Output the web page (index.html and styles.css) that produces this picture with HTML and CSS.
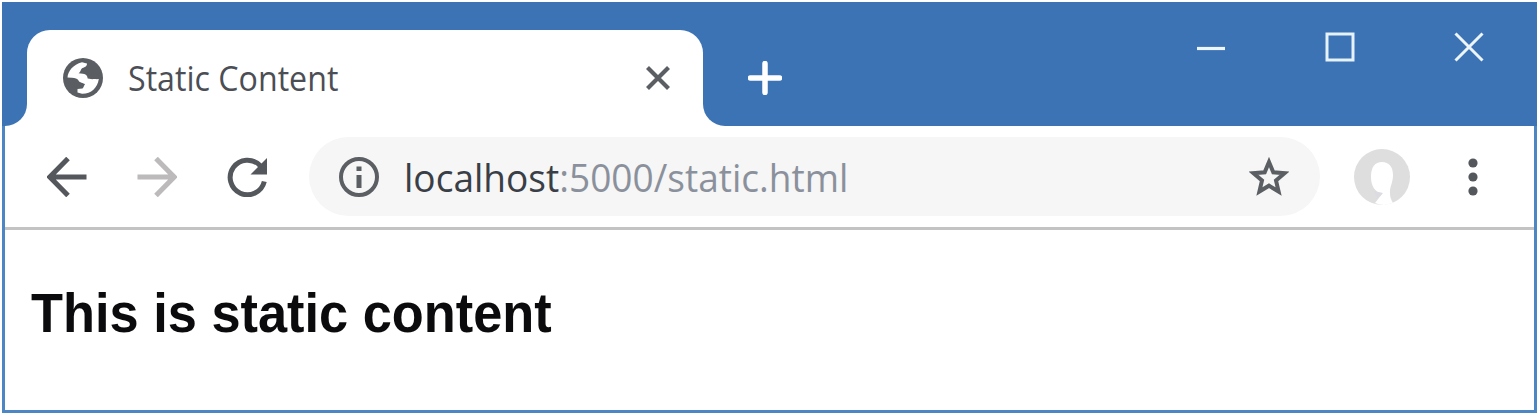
FILE: index.html
```html
<!DOCTYPE html>
<html lang="en">
<head>
<meta charset="utf-8">
<title>Static Content</title>
<link rel="stylesheet" href="styles.css">
</head>
<body>
<div class="window">
  <header class="titlebar">
    <div class="tab-edge tab-edge-left"></div>
    <div class="tab">
      <svg class="globe" viewBox="0 0 40 40"><circle cx="20" cy="20" r="20" fill="#5a5e63"/><path d="M4.500 19.500C5 13 10 6.500 19 4.200L24 5.500C24 8.500 22 9 19.500 10C17.500 11 18 14 15.500 15.300L20 15.700C23 16 24.500 18 24.700 20.500L29.500 21.200C31 20.500 33 21.500 35.800 21C34.500 30 28 36 19 35.800L14.500 34.500V31L19.500 30.500C21 29.500 20.500 27.500 22 26.500C20.500 24.500 16.500 25 15.500 22.500C14.500 20.500 12 19.800 9 19.700Z" fill="#fff"/></svg>
      <span class="tab-title">Static Content</span>
      <svg class="tab-close" viewBox="0 0 24 24"><path d="M1.500 1.500L22.500 22.500M22.500 1.500L1.500 22.500" stroke="#5b5e63" stroke-width="4.200"/></svg>
    </div>
    <div class="tab-edge tab-edge-right"></div>
    <svg class="new-tab" viewBox="0 0 34 34"><path d="M17 2.500V31.500M2.500 17H31.500" stroke="#fff" stroke-width="5.500" stroke-linecap="round"/></svg>
    <div class="controls">
      <svg viewBox="0 0 30 30"><path d="M1 16.500H29" stroke="#eef6fd" stroke-width="3.200"/></svg>
      <svg viewBox="0 0 30 30"><rect x="2" y="2" width="26" height="26" fill="none" stroke="#e6f2fc" stroke-width="3"/></svg>
      <svg viewBox="0 0 30 30"><path d="M1.500 1.500L28.500 28.500M28.500 1.500L1.500 28.500" stroke="#eef6fd" stroke-width="3"/></svg>
    </div>
  </header>
  <nav class="toolbar">
    <svg class="nav-icon" viewBox="0 0 40 40"><path d="M21 1.500L2.800 20L21 38.500M3 20H39.500" fill="none" stroke="#54575c" stroke-width="5"/></svg>
    <svg class="nav-icon" viewBox="0 0 40 40"><path d="M19 1.500L37.200 20L19 38.500M37 20H.5" fill="none" stroke="#bcbabb" stroke-width="5"/></svg>
    <svg class="nav-icon" viewBox="0 0 40 40"><path d="M37.300 24.500A17.300 17.300 0 1 1 33 8.500L35 10.500" fill="none" stroke="#54575c" stroke-width="5"/><path d="M40 1V17.500H23.500Z" fill="#54575c"/></svg>
    <div class="address">
      <svg class="info" viewBox="0 0 40 40"><circle cx="20" cy="20" r="18" fill="none" stroke="#5b5e63" stroke-width="4"/><path d="M20 18V31M20 9.500V14" stroke="#5b5e63" stroke-width="5"/></svg>
      <span class="url"><span class="host">localhost</span>:5000/static.html</span>
      <svg class="star" viewBox="0 0 40 40"><path d="M20 5L24.300 15.300L35.500 16.200L27 23.500L29.600 34.500L20 28.700L10.400 34.500L13 23.500L4.500 16.200L15.700 15.300Z" fill="none" stroke="#5b5e63" stroke-width="4"/></svg>
    </div>
    <svg class="avatar" viewBox="0 0 56 56"><circle cx="28" cy="28" r="28" fill="#dedede"/><path d="M28 13C35 13 39 18 39 26C39 34 35.500 38 36 44Q36 50 39 53.500Q31 58 21 54L28 45C21 43 17 37 17 28C17 18 21 13 28 13Z" fill="#fff"/><path d="M20 42L29 44L23 50Z" fill="#dbdbe1"/></svg>
    <svg class="menu" viewBox="0 0 10 38"><g fill="#54575c"><circle cx="5" cy="5" r="4.600"/><circle cx="5" cy="19" r="4.600"/><circle cx="5" cy="33" r="4.600"/></g></svg>
  </nav>
  <main class="page"><h1>This is static content</h1></main>
</div>
</body>
</html>
```
FILE: styles.css
```css
* { box-sizing: border-box; }
body { margin: 0; padding: 2px; background: #fff; }
svg { display: block; flex: none; }
.window {
  width: 1535px;
  height: 411px;
  border: 3px solid #4c87c3;
  border-top: 0;
  background: #fff;
}
.titlebar {
  height: 124px;
  margin: 0 -3px;
  display: flex;
  align-items: flex-end;
  background: #3b73b5;
}
.tab-edge {
  width: 25px;
  height: 24px;
  background: #fff;
}
.tab-edge::before {
  content: "";
  display: block;
  height: 100%;
  background: #3b73b5;
}
.tab-edge-left::before { border-bottom-right-radius: 22px; }
.tab-edge-right::before { border-bottom-left-radius: 22px; }
.tab {
  width: 676px;
  height: 96px;
  display: flex;
  align-items: center;
  padding: 0 33px 0 36px;
  background: #fff;
  border-radius: 23px 23px 0 0;
}
.globe { width: 40px; height: 40px; }
.tab-title {
  flex: 1;
  margin-left: 25px;
  font: 34px/48px "Open Sans", sans-serif;
  color: #4b4e55;
  white-space: nowrap;
  transform: scaleX(.946);
  transform-origin: left;
}
.tab-close { width: 24px; height: 24px; }
.new-tab { width: 34px; height: 34px; margin: 0 0 31px 20px; }
.controls {
  align-self: flex-start;
  display: flex;
  gap: 99px;
  margin: 30px 53px 0 auto;
}
.controls svg { width: 30px; height: 30px; }
.toolbar {
  height: 104px;
  display: flex;
  align-items: center;
  padding: 0 56px 0 42px;
  border-bottom: 3px solid #c3c3c3;
}
.nav-icon { width: 40px; height: 40px; margin-right: 50px; }
.address {
  width: 1011px;
  height: 79px;
  margin-left: -8px;
  display: flex;
  align-items: center;
  padding: 0 31px 0 30px;
  border-radius: 40px;
  background: #f5f6f5;
}
.info { width: 40px; height: 40px; }
.url {
  flex: 1;
  margin-left: 25px;
  font: 38px/54px "Open Sans", sans-serif;
  color: #8b919c;
  white-space: nowrap;
  transform: scaleX(.975);
  transform-origin: left;
}
.host { color: #3a3e46; }
.star { width: 40px; height: 40px; }
.avatar { width: 56px; height: 56px; margin-left: 34px; }
.menu { width: 10px; height: 38px; margin-left: auto; }
.page { padding: 51px 26px 0; }
h1 {
  margin: 0;
  width: max-content;
  font: bold 56px/64px "Liberation Sans", Arial, sans-serif;
  color: #0b0b0d;
  transform: scaleX(.935);
  transform-origin: left;
}
```
